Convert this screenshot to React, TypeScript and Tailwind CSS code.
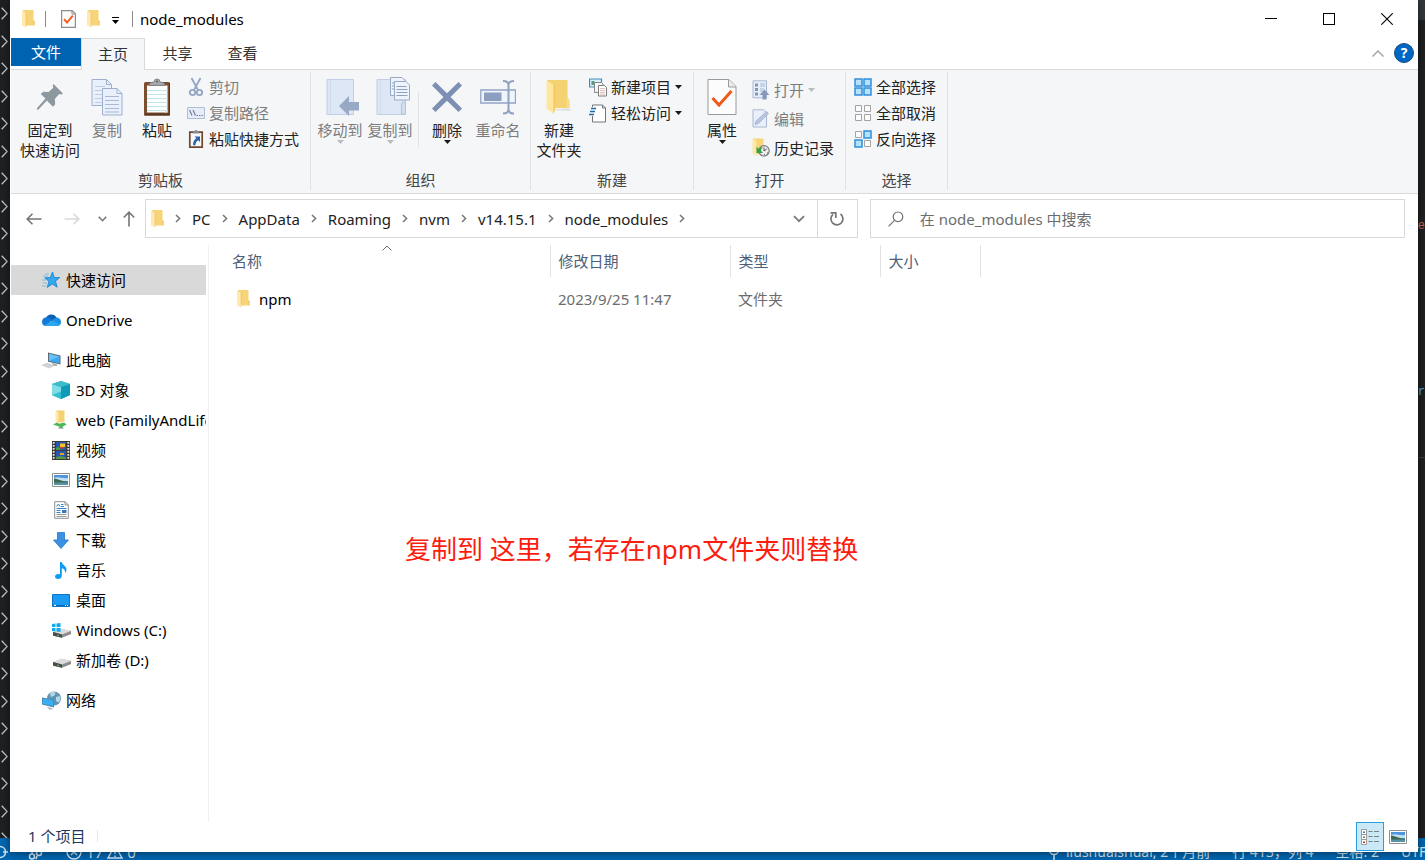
import React from "react";

type IconProps = { className?: string };

/* ---------- small glyphs ---------- */

const Caret = ({ className = "text-[#1a1a1a]" }: IconProps) => (
  <svg width="7" height="4" viewBox="0 0 7 4" className={className}>
    <path d="M0 0h7L3.5 4z" fill="currentColor" />
  </svg>
);

const Chevron = ({ className = "text-[#767676]" }: IconProps) => (
  <svg width="6" height="9" viewBox="0 0 6 9" fill="none" className={className}>
    <path d="M1 1l3.6 3.5L1 8" stroke="currentColor" strokeWidth="1.5" />
  </svg>
);

const ChevronDown = ({ className = "text-[#7b7b7b]" }: IconProps) => (
  <svg width="12" height="8" viewBox="0 0 12 8" fill="none" className={className}>
    <path d="M1 1.2l5 5 5-5" stroke="currentColor" strokeWidth="1.8" />
  </svg>
);

const FolderIcon = () => (
  <svg width="13" height="18" viewBox="0 0 13 18">
    <path d="M1 0h10.500v10l1 1.200V15.500H4z" fill="#f7d478" />
    <path d="M11.500 10l1 1.200v4.300h-1z" fill="#eec667" />
    <path d="M0 .6l3.800 2.400v14.600L0 15.500z" fill="#ffe9ae" />
    <path d="M3.800 3v14.600l.8-2.100V3z" fill="#f0c563" />
  </svg>
);

const CheckPageIcon = () => (
  <svg width="15" height="18" viewBox="0 0 15 18" fill="none">
    <path d="M.6.6h10.600l3.200 3.200v13.600H.6z" fill="#fbfbfb" stroke="#8d8d8d" strokeWidth="1.200" />
    <path d="M11 .6v3.400h3.400" stroke="#8d8d8d" />
    <path d="M3 9.200l3 3.300 5.800-6.800" stroke="#f1591d" strokeWidth="1.900" />
  </svg>
);

/* ---------- ribbon: large icons ---------- */

const PinIcon = () => (
  <svg width="28" height="28" viewBox="0 0 28 28" className="text-[#8c979e]">
    <path
      d="M17.500 1L27 10.500l-1.500 1-2.300-.4-4.400 4.800.4 5.300-2.300 2.600-6-6.200L2.500 26.500.8 26.800l.4-1.800 8.300-9.400L4.800 11l2.500-2.200 5.300.2 4.700-4.300-.6-2.500z"
      fill="currentColor"
    />
  </svg>
);

const CopyIcon = () => (
  <svg width="32" height="38" viewBox="0 0 32 38" fill="none" stroke="#9fb0cd">
    <path d="M1 1.500h14.500l5 5V27.500H1z" fill="#e9effb" />
    <path d="M15.500 1.500v5h5" />
    <path d="M4 8.500h10M4 12.500h7M4 16.500h7M4 20.500h7M4 24.500h7" stroke="#c0cce2" />
    <path d="M11.500 10.500H26l5 5v21.500H11.500z" fill="#e9effb" />
    <path d="M26 10.500v5h5" />
    <path d="M14 18.500h14M14 22.500h14M14 26.500h14M14 30.500h14M14 34h14" stroke="#a9b9d5" />
  </svg>
);

const PasteIcon = () => (
  <svg width="28" height="38" viewBox="0 0 28 38">
    <rect x="1" y="4" width="26" height="33.500" rx="1.500" fill="#7b4e30" />
    <path d="M26 5h1v32.500H1l1.500-2H26z" fill="#59341e" />
    <path d="M4 7.500h20.500v27H4z" fill="#fff" />
    <path d="M4 12.500h20.500M4 16.500h20.500M4 20.500h20.500M4 24.500h20.500M4 28.500h20.500M4 32.500h20.500" stroke="#bfe3ef" />
    <path d="M21.500 34.500l3-3v3z" fill="#d3e3ea" />
    <path d="M6 7.500c0-3 3-3.300 5-3.500a3 3 0 0 1 6 0c2 .2 5 .5 5 3.500z" fill="#a5a8aa" stroke="#77797b" strokeWidth=".8" />
    <circle cx="14" cy="3.500" r="1" fill="#595b5c" />
  </svg>
);

const MoveToIcon = () => (
  <svg width="40" height="38" viewBox="-6 0 40 38">
    <path d="M1 1.500h26.500v35H1z" fill="#dde7f5" stroke="#c1cfe5" />
    <path d="M4.500 2v34" stroke="#d0dcee" />
    <path d="M13 28L23 18v6h10v8.500H23V38z" fill="#98a9c5" />
  </svg>
);

const CopyToIcon = () => (
  <svg width="40" height="40" viewBox="-6 1 40 40" fill="none">
    <path d="M1 3.500h28.500v35H1z" fill="#dde7f5" stroke="#c1cfe5" />
    <path d="M4.500 4v34" stroke="#d0dcee" />
    <path d="M25.500 38V28c1.500-3 3-3 4 0v10z" fill="#d2def0" stroke="#b5c4dc" />
    <g fill="#eef3fc" stroke="#98a9c5">
      <path d="M14.500 1.500H26l3 3v15H14.500z" />
      <path d="M18.500 5.500H30l3.500 3.500v15h-15z" />
    </g>
    <path d="M16 7h2M16 10h2M16 13h2M20.500 10.500h10M20.500 13.500h11M20.500 16.500h11M20.500 19.500h11" stroke="#8ea1c1" />
  </svg>
);

const DeleteIcon = () => (
  <svg width="32" height="32" viewBox="0 0 32 32">
    <path d="M1 4.500L4.500 1 16 12.200 27.500 1 31 4.500 19.500 16 31 27.500 27.500 31 16 19.700 4.500 31 1 27.500 12.500 16z" fill="#7d8fb3" />
  </svg>
);

const RenameIcon = () => (
  <svg width="36" height="36" viewBox="0 0 36 36" fill="none">
    <path d="M.8 11h34.700v13H.8z" fill="#f0f5fd" stroke="#91a4c6" strokeWidth="1.300" />
    <path d="M4 13.500h17.500v8.500H4z" fill="#8c9fc1" />
    <path d="M23 2c4 0 5.500 1 5.500 4v24c0 3-1.500 4.500-5.500 4.500M34 2c-4 0-5.500 1-5.500 4v24c0 3 1.500 4.500 5.500 4.500" stroke="#8fa2c3" strokeWidth="2" />
  </svg>
);

const NewFolderIcon = () => (
  <svg width="26" height="36" viewBox="0 0 26 36">
    <path d="M4 31l20 1 1-1-3-2z" fill="#dfe0e1" />
    <path d="M1 1h20.500v17.500l2 3V29H8z" fill="#f5d271" />
    <path d="M21.500 18.500l2 3V29h-3V20z" fill="#f9dc86" />
    <path d="M.5 1.500L8 6v29L.5 29.500z" fill="#ffe6a0" />
    <path d="M7.500 6v29l1.500-4V6z" fill="#f2c65c" />
  </svg>
);

const PropertiesIcon = () => (
  <svg width="30" height="38" viewBox="0 0 30 38" fill="none">
    <path d="M1 1.500h21l7 7v28H1z" fill="#fcfcfc" stroke="#9a9a9a" />
    <path d="M21.500 1.500v7.500H29" fill="#ececec" stroke="#9a9a9a" />
    <path d="M5.500 20l6.500 7L24.500 13" stroke="#ef5a1b" strokeWidth="3" />
  </svg>
);

/* ---------- ribbon: small icons ---------- */

const CutIcon = () => (
  <svg width="18" height="20" viewBox="0 0 18 20" fill="none" stroke="#93a6c4">
    <path d="M4.500 1l6.500 12M13.500 1L7 13" strokeWidth="1.800" />
    <circle cx="5.500" cy="15.500" r="2.700" strokeWidth="1.800" />
    <circle cx="12.500" cy="15.500" r="2.700" strokeWidth="1.800" />
  </svg>
);

const CopyPathIcon = () => (
  <svg width="18" height="12" viewBox="0 0 18 12" fill="none">
    <path d="M.5.5h17v11H.5z" fill="#e6edf9" stroke="#afbdd8" />
    <path d="M2.500 3l2.500 5.500M6 3l2.500 5.500" stroke="#6d809f" strokeWidth="1.200" />
    <path d="M9.500 8.500h1.500M12 8.500h1.500M14.500 8.500H16" stroke="#6d809f" />
  </svg>
);

const PasteShortcutIcon = () => (
  <svg width="16" height="20" viewBox="0 0 16 20" fill="none">
    <path d="M1.800 3.200h12.400v15H1.800z" fill="#f7fafd" stroke="#70472b" strokeWidth="1.700" />
    <path d="M4.500 4.500c0-2 1.500-2 2-2.500a1.600 1.600 0 0 1 3 0c.5.500 2 .5 2 2.500z" fill="#8b8e90" />
    <path d="M6.500 7.500H12V13l-1.800-1.800c-2 1.500-2.700 2.800-3 5.300L5 16c0-3 1.200-5 3.300-6.700z" fill="#2c63a5" />
  </svg>
);

const NewItemIcon = () => (
  <svg width="18" height="19" viewBox="0 0 18 19" fill="none">
    <path d="M.5 1h12v8H.5z" fill="#d8eef8" stroke="#3d8fb8" strokeWidth="1.200" />
    <path d="M2.500 3h3v4h-3z" fill="#5d9a7b" />
    <path d="M5.500 4.500h7l1.500 1.500v8.500H5.500z" fill="#f6f6f6" stroke="#8a8a8a" />
    <path d="M9.500 7.500h6l2 2v8.500h-8z" fill="#fff" stroke="#7c7c7c" />
    <path d="M11 10.500h5M11 12.500h5M11 14.500h5M11 16.200h5" stroke="#e3bcb5" />
  </svg>
);

const EasyAccessIcon = () => (
  <svg width="18" height="19" viewBox="0 0 18 19" fill="none">
    <path d="M3.500 1h10l3 3v14h-13z" fill="#fff" stroke="#757575" />
    <path d="M13.500 1v3h3" stroke="#757575" />
    <path d="M2 4.500h5M1 7.500h5M0 10.500h5" stroke="#f4f6f8" strokeWidth="3" />
    <path d="M2 4.500h5M1 7.500h5M0 10.500h5" stroke="#1d6fb0" strokeWidth="1.300" />
  </svg>
);

const OpenIcon = () => (
  <svg width="18" height="20" viewBox="0 0 18 20" fill="none">
    <path d="M1 .8h13.500v17H1z" fill="#e7eefa" stroke="#a9b8d2" />
    <path d="M3 3.500h3v3H3zM3 8h3v3H3zM3 12.500h3v3H3z" fill="#8195b7" />
    <path d="M8 4h5M8 6h5M8 9h4M8 11h3" stroke="#a9b8d2" />
    <path d="M12.500 9.500l5 5.500h-3v4.500h-4V15h-3z" fill="#8799ba" />
  </svg>
);

const EditIcon = () => (
  <svg width="18" height="19" viewBox="0 0 18 19" fill="none">
    <path d="M1 .8h10.500l3 3v14.200H1z" fill="#e9effb" stroke="#a9b8d2" />
    <path d="M3 15.500l1-3.500L14.500 2.500l2 2L6.500 14.500z" fill="#b9c6dc" stroke="#9caecb" strokeWidth=".8" />
  </svg>
);

const HistoryIcon = () => (
  <svg width="18" height="19" viewBox="0 0 18 19" fill="none">
    <path d="M1 .5h10.500V14L5 17z" fill="#f6d679" />
    <path d="M.5.5l4 2.500v15l-4-2.500z" fill="#ffe7a4" />
    <circle cx="12" cy="12.800" r="5.200" fill="#ececec" stroke="#7b7b7b" strokeWidth="1.200" />
    <path d="M12 9.500v3.500l2.700-2M15 15h1M12 16.500h.8" stroke="#555" />
    <path d="M4.500 8.500V15H11l-2-2c0-2 .8-3 2-4-2.200 0-3.600.9-4.500 2z" fill="#33a04a" />
  </svg>
);

const tiles = ["M1 1h7v7H1z", "M10 1h7v7h-7z", "M1 10h7v7H1z", "M10 10h7v7h-7z"];
const smallTiles = ["M1.500 1.500h6v6h-6z", "M10.500 1.500h6v6h-6z", "M1.500 10.500h6v6h-6z", "M10.500 10.500h6v6h-6z"];

const TilesIcon = ({ on }: { on: number[] }) => (
  <svg width="18" height="18" viewBox="0 0 18 18">
    {tiles.map((d, i) => (
      <path
        key={d}
        d={on.includes(i) ? d : smallTiles[i]}
        fill={on.includes(i) ? "#b5e1fb" : "#fcfcfc"}
        stroke={on.includes(i) ? "#2f8fdb" : "#a3a3a3"}
        strokeWidth={on.includes(i) ? 1.5 : 1}
      />
    ))}
  </svg>
);

/* ---------- sidebar icons ---------- */

const StarIcon = () => (
  <svg width="20" height="18" viewBox="0 0 20 18">
    <path d="M11.500 1l1.800 5.500h5.500l-4.300 3.700 1.700 6L11.300 13l-5 3.400 1.600-6L3.800 6.800l5.400-.3z" fill="#35a7ef" stroke="#1180cc" strokeWidth=".8" />
    <path d="M4 3h4M2 5h5M1 9h4M2 12h4M1 15h4" stroke="#77bfea" />
  </svg>
);

const CloudIcon = () => (
  <svg width="20" height="14" viewBox="0 0 20 14">
    <path d="M5 5a5.800 5.800 0 0 1 10.500-.5L11 9z" fill="#0b5fb4" />
    <path d="M4.500 13A4.300 4.300 0 0 1 5 4.500c2-.5 3.500.3 6 2L6 13z" fill="#1279d4" />
    <path d="M15 4.500c3 0 5 2 5 4.500s-1.500 4-4 4H10l1-6z" fill="#1c8fe4" />
    <path d="M3 12.500L11.500 7.500l7.500 4c-.7 1-1.700 1.500-3.300 1.500H4.500z" fill="#2ba6ee" />
  </svg>
);

const PcIcon = () => (
  <svg width="20" height="17" viewBox="0 0 20 17">
    <path d="M7 .5l12.500 3v9L7 9.800z" fill="#5c6a75" />
    <path d="M8 1.800l10.700 2.600v7L8 9z" fill="#3aa8f0" />
    <path d="M8 1.800l10.700 2.600L8 9z" fill="#63c0f8" />
    <path d="M0 13l6-2.200 8 2.700L8 16.500z" fill="#cfd3d6" />
    <path d="M11 11l5 1.300v2l-4-1z" fill="#a4aaae" />
  </svg>
);

const CubeIcon = () => (
  <svg width="18" height="18" viewBox="0 0 18 18">
    <path d="M9 0l9 3v11l-9 4-9-4V3z" fill="#1ba3bd" />
    <path d="M0 3l9 3v12l-9-4z" fill="#7fdde6" />
    <path d="M18 3L9 6v12l9-4z" fill="#0f9ab8" />
    <path d="M0 3l9-3 9 3-9 3z" fill="#3fbccb" />
    <path d="M0 14l9-3.500V18z" fill="#36bfcf" />
  </svg>
);

const NetFolderIcon = () => (
  <svg width="16" height="20" viewBox="0 0 16 20">
    <path d="M3 .5h8.500v11L5 13z" fill="#f5d174" />
    <path d="M2.500.5l3 2v11.500l-3-2z" fill="#ffe9ae" />
    <path d="M0 14.500l4-2 2 1.200 5-1.200 2.500 2-4 2.300.5 1.500H6l.5-1.500z" fill="#4db85b" />
    <path d="M5.500 18h5" stroke="#999" />
  </svg>
);

const VideoIcon = () => (
  <svg width="18" height="19" viewBox="0 0 18 19">
    <path d="M0 0h18v19H0z" fill="#3a3a3a" />
    <path d="M4 1h10v8H4zM4 10h10v8H4z" fill="#2b57b4" />
    <path d="M1.700 1v18M16.300 1v18" stroke="#e9e9e9" strokeWidth="1.800" strokeDasharray="1.700 1.300" />
    <path d="M8 2.500h5v3.500H8z" fill="#eec32c" />
    <path d="M8 6h4v1.500H8z" fill="#d0402e" />
    <path d="M4 7l2.500-1.500L9 9H4zM4 16l5-1 5 1.500V18H4z" fill="#4e9a45" />
    <path d="M8 12h4v2H8z" fill="#e0a62c" />
  </svg>
);

const PictureIcon = () => (
  <svg width="18" height="14" viewBox="0 0 18 14">
    <path d="M.5.5h17v13H.5z" fill="#fff" stroke="#8f8f8f" />
    <path d="M2 2h14v10H2z" fill="#4f95dd" />
    <path d="M2 5c5-2 8 1 14 0v3H2z" fill="#c1e0f4" />
    <path d="M2 5.500c5 .5 8 3 14 3.300V10H2z" fill="#3e6b4f" />
    <path d="M2 9.500h14V12H2z" fill="#5b92a4" />
  </svg>
);

const DocIcon = () => (
  <svg width="15" height="18" viewBox="0 0 15 18" fill="none">
    <path d="M.7.7h10.500l3.100 3.100v13.500H.7z" fill="#fff" stroke="#8f8f8f" />
    <path d="M11 .7V4h3.300" stroke="#8f8f8f" />
    <path d="M2.500 5.500L4.500 3l1.500 2.500M7 3.500h2.500M7 5.500h3M2.500 7.500h10M2.500 9.500h4M2.500 11.500h4" stroke="#2d86cb" />
    <path d="M8 9h4.500v3H8z" fill="#3c76b3" />
    <path d="M2.500 13.500h10M2.500 15.500h10" stroke="#9b9b9b" />
  </svg>
);

const DownloadIcon = () => (
  <svg width="16" height="17" viewBox="0 0 16 17">
    <path d="M4.500.5h7V8h4L8 16.500.5 8h4z" fill="#3b92e2" stroke="#2877c4" strokeWidth=".8" />
  </svg>
);

const MusicIcon = () => (
  <svg width="12" height="17" viewBox="0 0 12 17">
    <path d="M5 0h1.800c.3 3 4.700 4 4.700 7.500 0 1.500-.6 2.800-1.500 3.500.4-3-1-4-3.200-4.700V14c0 1.800-1.600 3-3.600 3S0 16 0 14.500 1.500 12 3 12c.8 0 1.500.1 2 .4z" fill="#0d9bf5" />
  </svg>
);

const DesktopIcon = () => (
  <svg width="18" height="13" viewBox="0 0 18 13">
    <path d="M.5.5h17v12H.5z" fill="#1b9bf5" stroke="#0c76c5" />
    <path d="M1 11.500h16" stroke="#0b67b1" />
    <path d="M2 11.500h2M13 11.500h1M15 11.500h1" stroke="#fff" />
  </svg>
);

const DriveIcon = ({ win }: { win?: boolean }) => (
  <svg width="19" height="15" viewBox="0 0 19 15">
    <path d="M1 9.500L9.500 6 19 8v3l-9 3.800-9-2z" fill="#8b8b8b" />
    <path d="M1 9L9.500 5.500 19 8l-9 3.500z" fill="#dcdcdc" />
    <path d="M1 9l9 2.500v3.300L1 12.500z" fill="#4b4b4b" />
    <path d="M5 11.500l2 .6v1l-2-.6z" fill="#43d45c" />
    {win && <path d="M0 1l3.500-.5V4H0zM4.500.5L8.500 0v4h-4zM0 5h3.500v3.500L0 8zM4.500 5h4v4l-4-.5z" fill="#0cacee" />}
  </svg>
);

const NetworkIcon = () => (
  <svg width="19" height="19" viewBox="0 0 19 19">
    <circle cx="12" cy="7.500" r="7" fill="#5f94b4" />
    <path d="M8 2.500c2-2 4-1.500 5.500-1l-1 3L9 6zM14 6l4-1c.8 3 0 5-1.500 6.500L14 10z" fill="#b5d8e6" />
    <path d="M0 6.500l12 2v8L0 13.500z" fill="#4c86a8" />
    <path d="M.8 7.500l10.400 1.800v6L.8 12.700z" fill="#3aaef5" />
    <path d="M5 16l4 .7 2 1.500-3.500.6z" fill="#adb3b7" />
  </svg>
);

const DetailsIcon = () => (
  <svg width="18" height="16" viewBox="0 0 18 16" fill="none">
    <path d="M.5.500h5v15h-5zM.5 5.500h5M.5 10.500h5" fill="#fff" stroke="#9b9b9b" />
    <path d="M2 2.500h2v1.500H2z" fill="#3d7fa8" />
    <path d="M2 7.500h2V9H2z" fill="#8a7340" />
    <path d="M2 12.500h2V14H2z" fill="#d42a1c" />
    <path d="M7.500 2.500h4M13 2.500h5M7.500 7.500h4M13 7.500h5M7.500 12.500h4M13 12.500h5" stroke="#7b8084" />
  </svg>
);

/* ---------- ribbon parts ---------- */

type BigButtonProps = {
  icon: React.ReactNode;
  lines: string[];
  disabled?: boolean;
  caret?: boolean;
  className?: string;
};

function BigButton({ icon, lines, disabled, caret, className = "w-[50px]" }: BigButtonProps) {
  return (
    <button className={`flex flex-col items-center shrink-0 pt-[5px] ${disabled ? "text-[#7d7d7d]" : "text-[#222]"} ${className}`}>
      <span className="flex h-10 items-center justify-center mb-[3px]">{icon}</span>
      {lines.map(line => (
        <span key={line} className="leading-5 whitespace-nowrap">
          {line}
        </span>
      ))}
      {caret && <Caret className={disabled ? "text-[#b9bcbf]" : "text-[#1a1a1a]"} />}
    </button>
  );
}

type SmallButtonProps = {
  icon: React.ReactNode;
  label: string;
  disabled?: boolean;
  caret?: boolean;
  className?: string;
};

function SmallButton({ icon, label, disabled, caret, className = "h-[26px]" }: SmallButtonProps) {
  return (
    <button className={`flex items-center gap-1 whitespace-nowrap ${disabled ? "text-[#7d7d7d]" : "text-[#222]"} ${className}`}>
      <span className="flex w-[18px] justify-center">{icon}</span>
      {label}
      {caret && <Caret className={disabled ? "text-[#b9bcbf]" : "text-[#1a1a1a]"} />}
    </button>
  );
}

function RibbonGroup({ title, className, children }: { title: string; className: string; children: React.ReactNode }) {
  return (
    <section className="flex flex-col shrink-0 h-[118px] border-r border-[#dfe1e3]">
      <div className={`flex flex-1 items-start ${className}`}>{children}</div>
      <h2 className="h-5 leading-5 text-center text-[#444]">{title}</h2>
    </section>
  );
}

function Ribbon() {
  return (
    <div className="flex bg-[#f4f6f8] border-b border-[#d9dadb] pt-[2px] pb-[3px]">
      <RibbonGroup title="剪贴板" className="pl-[7px] pr-[11px]">
        <BigButton icon={<PinIcon />} lines={["固定到", "快速访问"]} className="w-16" />
        <BigButton icon={<CopyIcon />} lines={["复制"]} disabled />
        <BigButton icon={<PasteIcon />} lines={["粘贴"]} />
        <div className="pt-[2px] pl-[5px]">
          <SmallButton icon={<CutIcon />} label="剪切" disabled />
          <SmallButton icon={<CopyPathIcon />} label="复制路径" disabled />
          <SmallButton icon={<PasteShortcutIcon />} label="粘贴快捷方式" />
        </div>
      </RibbonGroup>
      <RibbonGroup title="组织" className="pl-1 pr-[6px]">
        <BigButton icon={<MoveToIcon />} lines={["移动到"]} disabled caret />
        <BigButton icon={<CopyToIcon />} lines={["复制到"]} disabled caret />
        <div className="h-[55px] w-px mt-5 mx-[3px] bg-[#dfe1e3]" />
        <BigButton icon={<DeleteIcon />} lines={["删除"]} caret />
        <BigButton icon={<RenameIcon />} lines={["重命名"]} disabled className="w-[52px]" />
      </RibbonGroup>
      <RibbonGroup title="新建" className="pl-[3px] pr-[11px]">
        <BigButton icon={<NewFolderIcon />} lines={["新建", "文件夹"]} />
        <div className="pt-[2px] pl-[5px]">
          <SmallButton icon={<NewItemIcon />} label="新建项目" caret />
          <SmallButton icon={<EasyAccessIcon />} label="轻松访问" caret />
        </div>
      </RibbonGroup>
      <RibbonGroup title="打开" className="pl-[3px] pr-[11px]">
        <BigButton icon={<PropertiesIcon />} lines={["属性"]} caret />
        <div className="pt-[3px] pl-[5px]">
          <SmallButton icon={<OpenIcon />} label="打开" disabled caret className="h-[29px]" />
          <SmallButton icon={<EditIcon />} label="编辑" disabled className="h-[29px]" />
          <SmallButton icon={<HistoryIcon />} label="历史记录" className="h-[29px]" />
        </div>
      </RibbonGroup>
      <RibbonGroup title="选择" className="pl-2 pr-[11px] pt-[2px] flex-col">
        <SmallButton icon={<TilesIcon on={[0, 1, 2, 3]} />} label="全部选择" />
        <SmallButton icon={<TilesIcon on={[]} />} label="全部取消" />
        <SmallButton icon={<TilesIcon on={[1, 2]} />} label="反向选择" />
      </RibbonGroup>
    </div>
  );
}

/* ---------- window chrome ---------- */

function TitleBar() {
  return (
    <header className="flex h-[38px] justify-between">
      <div className="flex items-center pl-[11px]">
        <FolderIcon />
        <span className="w-px h-4 bg-[#8a8a8a] ml-[10px] mr-[15px]" />
        <button aria-label="属性" className="mr-[11px]">
          <CheckPageIcon />
        </button>
        <button aria-label="新建文件夹" className="mr-3">
          <FolderIcon />
        </button>
        <button aria-label="自定义快速访问工具栏" className="flex flex-col items-center gap-[2px] mr-[13px] pt-[2px]">
          <span className="w-[7px] h-px bg-black" />
          <Caret className="text-black" />
        </button>
        <span className="w-px h-4 bg-[#8a8a8a] mr-[7px]" />
        <h1 className="text-black">node_modules</h1>
      </div>
      <div className="flex pr-[2px]">
        <button aria-label="最小化" className="w-[58px] flex items-center justify-center">
          <svg width="12" height="12" viewBox="0 0 12 12" shapeRendering="crispEdges">
            <path d="M0 5h12v1H0z" />
          </svg>
        </button>
        <button aria-label="最大化" className="w-[58px] flex items-center justify-center">
          <svg width="12" height="12" viewBox="0 0 12 12" shapeRendering="crispEdges">
            <path d="M.5.5h11v11H.5z" fill="none" stroke="#000" />
          </svg>
        </button>
        <button aria-label="关闭" className="w-[58px] flex items-center justify-center">
          <svg width="12" height="12" viewBox="0 0 12 12">
            <path d="M.3.3l11.400 11.400M11.700.3L.3 11.700" fill="none" stroke="#000" strokeWidth="1.100" />
          </svg>
        </button>
      </div>
    </header>
  );
}

function TabRow() {
  return (
    <div className="flex justify-between h-8 shadow-[inset_0_-1px_0_#d9dadb] text-[#333]">
      <nav className="flex">
        <button className="w-[70px] h-7 bg-[#0063b1] text-white">文件</button>
        <button className="w-16 h-8 pb-[2px] bg-[#f4f6f8] border border-b-0 border-[#d9dadb]">主页</button>
        <button className="w-[65px] h-[30px]">共享</button>
        <button className="w-[65px] h-[30px]">查看</button>
      </nav>
      <div className="flex items-center h-[30px] gap-[10px] pr-1">
        <button aria-label="最小化功能区">
          <svg width="12" height="7" viewBox="0 0 12 7" fill="none">
            <path d="M.5 6.500L6 1l5.500 5.500" stroke="#a6a6a6" strokeWidth="1.500" />
          </svg>
        </button>
        <button aria-label="帮助" className="size-5 rounded-full bg-[#0067c5] border border-[#1b4f86] text-white text-sm leading-none font-bold">
          ?
        </button>
      </div>
    </div>
  );
}

const crumbs = ["PC", "AppData", "Roaming", "nvm", "v14.15.1", "node_modules"];

function AddressRow() {
  return (
    <div className="flex items-center pt-[5px] pl-1 pr-[13px] text-[#222]">
      <button aria-label="后退" className="w-[38px] flex justify-center">
        <svg width="16" height="12" viewBox="0 0 16 12" fill="none" stroke="#747474" strokeWidth="1.600">
          <path d="M15.500 6H1.200M6.500.8L1.200 6l5.300 5.200" />
        </svg>
      </button>
      <button aria-label="前进" className="w-[38px] flex justify-center">
        <svg width="16" height="12" viewBox="0 0 16 12" fill="none" stroke="#d9d9d9" strokeWidth="1.600">
          <path d="M.5 6h14.300M9.500.8L14.800 6l-5.300 5.200" />
        </svg>
      </button>
      <button aria-label="最近浏览的位置" className="w-[22px] flex justify-center">
        <svg width="9" height="6" viewBox="0 0 9 6" fill="none" stroke="#767676" strokeWidth="1.600">
          <path d="M.8.8l3.700 3.900L8.200.8" />
        </svg>
      </button>
      <button aria-label="上移" className="w-[31px] flex justify-center">
        <svg width="12" height="16" viewBox="0 0 12 16" fill="none" stroke="#747474" strokeWidth="1.600">
          <path d="M6 15.500V1.200M.8 6.500L6 1.200l5.200 5.300" />
        </svg>
      </button>
      <div className="flex flex-[4] min-w-0 h-[39px] border border-[#d9d9d9] mr-3 ml-px">
        <div className="flex flex-1 items-center pl-[5px] min-w-0">
          <FolderIcon />
          <span className="w-7 flex justify-center">
            <Chevron />
          </span>
          {crumbs.map(name => (
            <React.Fragment key={name}>
              <button>{name}</button>
              <span className="w-7 flex justify-center">
                <Chevron />
              </span>
            </React.Fragment>
          ))}
        </div>
        <button aria-label="以前的位置" className="w-9 flex items-center justify-center">
          <ChevronDown />
        </button>
        <button aria-label="刷新" className="w-10 flex items-center justify-center border-l border-[#d9d9d9]">
          <svg width="16" height="16" viewBox="0 0 16 16" fill="none" stroke="#767676" strokeWidth="1.700">
            <path d="M4 3.300a6 6 0 1 0 7.500-.3M1.500 1.800h5.300v5.200" />
          </svg>
        </button>
      </div>
      <label className="flex flex-[3] min-w-0 h-[39px] items-center border border-[#d9d9d9] gap-4">
        <svg width="16" height="16" viewBox="0 0 16 16" fill="none" stroke="#707070" strokeWidth="1.200" className="ml-[17px] shrink-0">
          <circle cx="10" cy="5.800" r="4.800" />
          <path d="M6.500 9.300L.6 15.300" />
        </svg>
        <input
          type="search"
          aria-label="搜索"
          placeholder="在 node_modules 中搜索"
          className="flex-1 min-w-0 bg-transparent outline-none placeholder:text-[#6d6d6d]"
        />
      </label>
    </div>
  );
}

/* ---------- body ---------- */

const places = [
  { icon: <CubeIcon />, label: "3D 对象" },
  { icon: <NetFolderIcon />, label: "web (FamilyAndLife)" },
  { icon: <VideoIcon />, label: "视频" },
  { icon: <PictureIcon />, label: "图片" },
  { icon: <DocIcon />, label: "文档" },
  { icon: <DownloadIcon />, label: "下载" },
  { icon: <MusicIcon />, label: "音乐" },
  { icon: <DesktopIcon />, label: "桌面" },
  { icon: <DriveIcon win />, label: "Windows (C:)" },
  { icon: <DriveIcon />, label: "新加卷 (D:)" }
];

type SideItemProps = { icon: React.ReactNode; label: string; className?: string };

function SideItem({ icon, label, className = "pl-[30px]" }: SideItemProps) {
  return (
    <a href="#" className={`flex items-center h-[30px] gap-[5px] overflow-hidden whitespace-nowrap text-black ${className}`}>
      <span className="flex w-5 shrink-0 justify-center">{icon}</span>
      {label}
    </a>
  );
}

function Sidebar() {
  return (
    <aside className="flex flex-col gap-[10px] w-[195px] shrink-0 pt-5">
      <SideItem icon={<StarIcon />} label="快速访问" className="pl-[30px] bg-[#d9d9d9]" />
      <SideItem icon={<CloudIcon />} label="OneDrive" />
      <div>
        <SideItem icon={<PcIcon />} label="此电脑" />
        {places.map(p => (
          <SideItem key={p.label} icon={p.icon} label={p.label} className="pl-10" />
        ))}
      </div>
      <SideItem icon={<NetworkIcon />} label="网络" />
    </aside>
  );
}

function FileList() {
  return (
    <main className="relative flex-1 ml-[2px] pl-[15px] border-l border-[#f0f0f0]">
      <table className="table-fixed w-[756px] text-left">
        <thead>
          <tr className="h-8 text-[#4c607a]">
            <th className="relative w-[326px] pl-2 font-normal border-r border-[#e2e2e2]">
              名称
              <svg width="10" height="6" viewBox="0 0 10 6" fill="none" className="absolute top-0 left-1/2 -translate-x-1/2">
                <path d="M.5 5.500L5 1l4.500 4.500" stroke="#6b6b6b" />
              </svg>
            </th>
            <th className="w-[180px] pl-2 font-normal border-r border-[#e2e2e2]">修改日期</th>
            <th className="w-[150px] pl-2 font-normal border-r border-[#e2e2e2]">类型</th>
            <th className="w-[100px] pl-2 font-normal border-r border-[#e2e2e2]">大小</th>
          </tr>
        </thead>
        <tbody>
          <tr className="text-[#6d6d6d]">
            <td className="pt-[7px]">
              <span className="flex items-center h-[30px] gap-[9px] pl-[13px] text-black">
                <FolderIcon />
                npm
              </span>
            </td>
            <td className="pl-2 pt-[7px]">2023/9/25 11:47</td>
            <td className="pl-2 pt-[7px]">文件夹</td>
            <td />
          </tr>
        </tbody>
      </table>
      <p className="absolute left-[196px] top-[286px] text-[26px] leading-9 whitespace-nowrap text-[#fb1d0e]">
        复制到 这里，若存在npm文件夹则替换
      </p>
    </main>
  );
}

function StatusBar() {
  return (
    <footer className="flex h-[30px] justify-between items-start">
      <div className="flex items-center h-7 pl-[17px] gap-3 text-[#1e395b]">
        <span>1 个项目</span>
        <span className="w-px h-3 bg-[#e8e8e8]" />
      </div>
      <div className="flex items-center pr-[11px] gap-[5px]">
        <button aria-label="详细信息" className="flex items-center justify-center w-7 h-[29px] bg-[#cbe8f6] border border-[#26a0da]">
          <DetailsIcon />
        </button>
        <button aria-label="大缩略图">
          <PictureIcon />
        </button>
      </div>
    </footer>
  );
}

function ExplorerWindow() {
  return (
    <div className="absolute top-0 bottom-2 left-[10px] right-[7px] flex flex-col bg-white pl-px shadow-[0_1px_8px_rgba(0,0,0,0.5)]">
      <TitleBar />
      <TabRow />
      <Ribbon />
      <AddressRow />
      <div className="flex flex-1 min-h-0 pt-[7px]">
        <Sidebar />
        <FileList />
      </div>
      <StatusBar />
    </div>
  );
}

/* The code editor that shows round the edges of the window. */
function EditorBehind() {
  return (
    <div className="flex flex-col h-full">
      <div className="flex flex-1 min-h-0 justify-between overflow-hidden">
        <div className="w-[10px]">
          {Array.from({ length: 31 }, (_, i) => (
            <div key={i} className="flex items-center pl-px odd:h-[27px] even:h-7">
              <svg width="7" height="13" viewBox="0 0 7 13" fill="none">
                <path d="M.7.8l5.500 5.700L.7 12.200" stroke="#c4c6c8" strokeWidth="1.300" />
              </svg>
            </div>
          ))}
        </div>
        <div className="flex flex-col items-end w-[7px] font-['Liberation_Mono',monospace] text-xs">
          <div className="w-full h-5 bg-[#35383b]" />
          <div className="h-[196px]" />
          <div className="h-5 leading-5 text-[#d0694f]">le</div>
          <div className="h-[146px]" />
          <div className="h-5 leading-5 text-[#4fb0dd]">ar</div>
          <div className="w-full h-14 border-b border-[#3a3a3a]" />
        </div>
      </div>
      <div className="h-[22px] overflow-hidden bg-[#0066b0] text-[#d5e5f2]">
        <div className="flex items-center justify-between h-7 whitespace-nowrap">
          <div className="flex items-center">
            <svg width="8" height="16" viewBox="0 0 8 16" fill="none" stroke="currentColor" strokeWidth="1.500">
              <path d="M0 2.500c3 0 5.500 2 5.500 5.500S3 13.500 0 13.500M3 8h5" />
            </svg>
            <svg width="16" height="16" viewBox="0 0 16 16" fill="none" stroke="currentColor" strokeWidth="1.500" className="ml-5 mr-[22px]">
              <circle cx="4" cy="12.500" r="2.500" />
              <circle cx="11" cy="9" r="2.500" />
              <path d="M4 10V2M8 15l1-3" />
            </svg>
            <svg width="16" height="16" viewBox="0 0 16 16" fill="none" stroke="currentColor" strokeWidth="1.400">
              <circle cx="8" cy="8" r="7" />
              <path d="M5 5l6 6M11 5l-6 6" />
            </svg>
            <span className="mx-1">17</span>
            <svg width="16" height="16" viewBox="0 0 16 16" fill="none" stroke="currentColor" strokeWidth="1.400">
              <path d="M8 1.500l7 12.500H1zM8 6v4M8 11.500v1.500" />
            </svg>
            <span className="ml-1">0</span>
          </div>
          <div className="flex items-center gap-[22px] w-[377px] text-sm">
            <span className="flex items-center gap-[6px]">
              <svg width="12" height="16" viewBox="0 0 12 16" fill="none" stroke="currentColor" strokeWidth="1.500">
                <circle cx="6" cy="6" r="4.500" />
                <path d="M6 10.500V16" />
              </svg>
              liushuaishuai, 2个月前
            </span>
            <span>行 413，列 4</span>
            <span>空格: 2</span>
            <span>UTF-8</span>
          </div>
        </div>
      </div>
    </div>
  );
}

export default function App() {
  return (
    <div className="relative h-screen overflow-hidden bg-[#1f2022] font-['Noto_Sans','Noto_Sans_CJK_SC',sans-serif] text-[15px] leading-5">
      <EditorBehind />
      <ExplorerWindow />
    </div>
  );
}
